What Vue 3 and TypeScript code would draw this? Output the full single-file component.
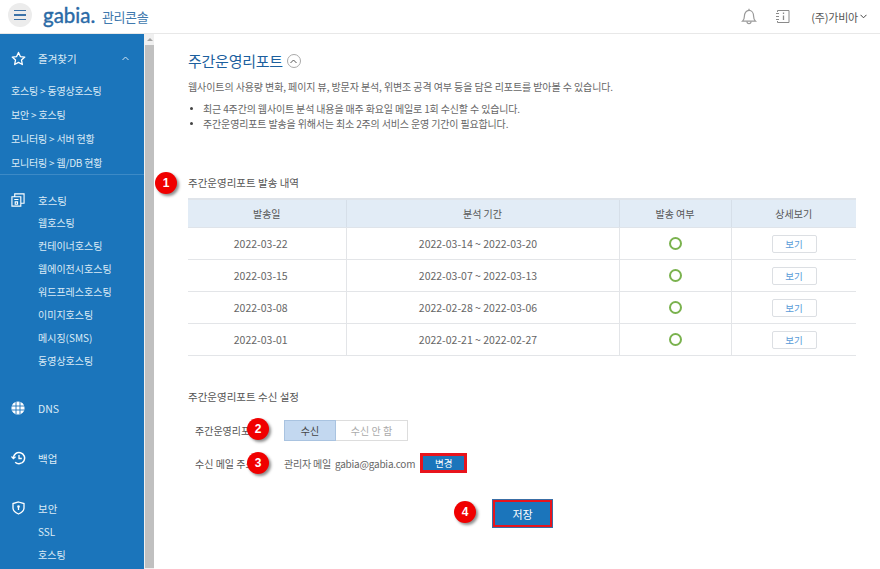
<script setup lang="ts">
interface ReportRow {
  sent: string
  period: string
}

const rows: ReportRow[] = [
  { sent: '2022-03-22', period: '2022-03-14 ~ 2022-03-20' },
  { sent: '2022-03-15', period: '2022-03-07 ~ 2022-03-13' },
  { sent: '2022-03-08', period: '2022-02-28 ~ 2022-03-06' },
  { sent: '2022-03-01', period: '2022-02-21 ~ 2022-02-27' },
]

const favorites = ['호스팅 > 동영상호스팅', '보안 > 호스팅', '모니터링 > 서버 현황', '모니터링 > 웹/DB 현황']
const hosting = ['웹호스팅', '컨테이너호스팅', '웹에이전시호스팅', '워드프레스호스팅', '이미지호스팅', '메시징(SMS)', '동영상호스팅']
</script>

<template>
  <div class="page">
    <header class="topbar">
      <button class="burger" aria-label="메뉴">
        <span></span><span></span><span></span>
      </button>
      <span class="logo">gabia.</span>
      <span class="console">관리콘솔</span>
      <div class="top-right">
        <svg class="bell" width="16" height="17" viewBox="0 0 16 17" fill="none" stroke="#9a9a9a" stroke-width="1.2">
          <path d="M1.5 13.2c1.4-1.3 1.9-2.6 1.9-5C3.400 5 5.300 2.300 8 2.300s4.600 2.700 4.600 5.900c0 2.400.5 3.700 1.900 5z" />
          <path d="M6 13.500c0 1.300.9 2.200 2 2.200s2-.9 2-2.200M8 .8v1.500" />
        </svg>
        <svg class="info" width="15" height="15" viewBox="0 0 15 15" fill="none" stroke="#8a8a8a" stroke-width="1">
          <path d="M2.500 3V1.500h11.500v12H2.500V12" />
          <path d="M1 4.500h3M1 7.500h3M1 10.500h3" />
          <path d="M8.500 6.500v4.500M8.500 3.500v1.500" stroke-width="1.300" />
        </svg>
        <span class="company">(주)가비아</span>
        <svg width="7" height="5" viewBox="0 0 7 5" fill="none" stroke="#444" stroke-width="1"><path d="M.5.8 3.500 3.800 6.500.8" /></svg>
      </div>
    </header>

    <div class="body">
      <nav class="sidebar">
        <section class="fav">
          <div class="nav-head">
            <svg class="nav-icon" width="15" height="15" viewBox="0 0 16 16" fill="none" stroke="#fff" stroke-width="1.400" stroke-linejoin="round">
              <path d="M8 1.500 10 5.900l4.700.6-3.500 3.200.9 4.700L8 12.100l-4.100 2.300.9-4.700L1.300 6.500 6 5.900z" />
            </svg>
            <span>즐겨찾기</span>
            <svg class="caret" width="7" height="5" viewBox="0 0 7 5" fill="none" stroke="#d5e6f3" stroke-width="1"><path d="M.5 4 3.500 1l3 3" /></svg>
          </div>
          <a v-for="item in favorites" :key="item" class="fav-link">{{ item }}</a>
        </section>

        <section class="group hosting">
          <div class="nav-head">
            <svg class="nav-icon" width="14" height="14" viewBox="0 0 15 15" fill="none" stroke="#fff" stroke-width="1.200">
              <path d="M1 4h9.500v10H1zM4 4V1h10v10h-3.500" />
              <path d="M3.500 7h4.500M4.500 9.500v2.500h2.500V9.500z" />
            </svg>
            <span>호스팅</span>
          </div>
          <a v-for="item in hosting" :key="item" class="sub-link">{{ item }}</a>
        </section>

        <section class="group dns">
          <div class="nav-head">
            <svg class="nav-icon" width="14" height="14" viewBox="0 0 14 14" fill="none" stroke="#fff" stroke-width="1.200">
              <circle cx="7" cy="7" r="6" fill="#fff" />
              <path stroke="#1b75bb" stroke-width=".9" d="M1 5h12M1 9h12M5 1v12M9 1v12" />
            </svg>
            <span>DNS</span>
          </div>
        </section>

        <section class="group backup">
          <div class="nav-head">
            <svg class="nav-icon" width="15" height="14" viewBox="0 0 15 14" fill="none" stroke="#fff" stroke-width="1.500">
              <path d="M2.400 7a5.600 5.600 0 1 1 1.800 4.200" />
              <path d="M.5 5.500 2.400 7.600 4.600 5.800" stroke-width="1.200" />
              <path d="M8 4v3.500h2.800" stroke-width="1.300" />
            </svg>
            <span>백업</span>
          </div>
        </section>

        <section class="group security">
          <div class="nav-head">
            <svg class="nav-icon shield" width="13" height="14" viewBox="0 0 13 14" fill="none" stroke="#fff" stroke-width="1.300">
              <path d="M6.500 1 12 2.600v4.200c0 3-2.400 5-5.500 6.200C3.400 11.800 1 9.800 1 6.800V2.600z" />
              <circle cx="6.500" cy="5.600" r="1.300" fill="#fff" stroke="none" />
              <path d="M6.500 6v3" />
            </svg>
            <span>보안</span>
          </div>
          <a class="sub-link">SSL</a>
          <a class="sub-link">호스팅</a>
        </section>
      </nav>

      <div class="scrollbar">
        <div class="scroll-btn"><i></i></div>
        <div class="scroll-thumb"></div>
      </div>

      <main class="content">
        <div class="title-row">
          <h1>주간운영리포트</h1>
          <span class="collapse">
            <svg width="7" height="5" viewBox="0 0 7 5" fill="none" stroke="#555" stroke-width="1"><path d="M.5 4 3.500 1l3 3" /></svg>
          </span>
        </div>
        <p class="lead">웹사이트의 사용량 변화, 페이지 뷰, 방문자 분석, 위변조 공격 여부 등을 담은 리포트를 받아볼 수 있습니다.</p>
        <ul class="notes">
          <li>최근 4주간의 웹사이트 분석 내용을 매주 화요일 메일로 1회 수신할 수 있습니다.</li>
          <li>주간운영리포트 발송을 위해서는 최소 2주의 서비스 운영 기간이 필요합니다.</li>
        </ul>

        <h2 class="section-title history">
          주간운영리포트 발송 내역
          <b class="badge b1">1</b>
        </h2>
        <table>
          <colgroup>
            <col class="c1" /><col class="c2" /><col class="c3" /><col class="c4" />
          </colgroup>
          <thead>
            <tr><th>발송일</th><th>분석 기간</th><th>발송 여부</th><th>상세보기</th></tr>
          </thead>
          <tbody>
            <tr v-for="row in rows" :key="row.sent">
              <td class="date">{{ row.sent }}</td>
              <td class="period">{{ row.period }}</td>
              <td><span class="ok"></span></td>
              <td><button class="view">보기</button></td>
            </tr>
          </tbody>
        </table>

        <h2 class="section-title settings">주간운영리포트 수신 설정</h2>
        <div class="form-row first">
          <label>주간운영리포트<b class="badge b2">2</b></label>
          <div class="toggle">
            <span class="on">수신</span>
            <span class="off">수신 안 함</span>
          </div>
        </div>
        <div class="form-row second">
          <label>수신 메일 주소<b class="badge b3">3</b></label>
          <span class="mail">관리자 메일&nbsp; gabia@gabia.com</span>
          <button class="change">변경</button>
        </div>
        <div class="save-row">
          <span class="save-wrap">
            <b class="badge b4">4</b>
            <button class="save">저장</button>
          </span>
        </div>
      </main>
    </div>
  </div>
</template>

<style>
html, body { margin: 0; background: #fff; overflow: hidden; }
</style>

<style scoped>
.page {
  width: 880px;
  height: 569px;
  overflow: hidden;
  display: flex;
  flex-direction: column;
  font-family: "Noto Sans CJK KR", "Noto Sans", sans-serif;
  color: #555;
}

/* top bar */
.topbar {
  flex: none;
  height: 33px;
  box-sizing: content-box;
  border-bottom: 1px solid #e8e8e8;
  display: flex;
  align-items: center;
  padding-left: 8px;
}
.burger {
  width: 24px;
  height: 24px;
  margin: -3px 11px 0 0;
  border: 0;
  padding: 0;
  border-radius: 50%;
  background: #ececec;
  display: flex;
  flex-direction: column;
  align-items: center;
  justify-content: center;
  gap: 3px;
}
.burger span { width: 12px; height: 1.500px; background: #3b72a8; }
.logo {
  font-family: Lato, sans-serif;
  font-size: 20.500px;
  line-height: 30px;
  font-weight: 400;
  color: #2a6aa6;
  -webkit-text-stroke: 0.4px #2a6aa6;
  margin-top: -4px;
  width: 53px;
}
.console { font-size: 13px; color: #3f79ae; margin-left: 6px; letter-spacing: -0.4px; }
.top-right { margin-left: auto; display: flex; align-items: center; padding-right: 13px; }
.bell { margin-right: 18px; }
.info { margin-right: 21px; }
.company { font-size: 11px; color: #555; margin-right: 2px; letter-spacing: -0.2px; }

.body { flex: 1; min-height: 0; display: flex; }

/* sidebar */
.sidebar {
  flex: none;
  width: 144px;
  background: #1b75bb;
  color: #dcebf6;
  font-size: 10px;
  overflow: hidden;
}
.nav-head {
  display: grid;
  grid-template-columns: 38px 1fr auto;
  align-items: center;
  height: 20px;
  font-size: 10.500px;
}
.nav-icon { margin-left: 11px; }
.shield { margin-left: 12px; }
.fav { height: 141px; padding-top: 14px; box-sizing: border-box; border-bottom: 1px solid #3d8ac6; }
.fav .nav-head { margin-bottom: 11px; }
.caret { margin-right: 15px; }
.fav-link { display: block; height: 24px; line-height: 24px; padding-left: 11px; letter-spacing: -0.2px; }
.group .nav-head { margin-bottom: 1px; }
.sub-link { display: block; height: 23px; line-height: 23px; padding-left: 38px; }
.hosting { padding-top: 15px; }
.dns { padding-top: 26px; }
.backup { padding-top: 29px; }
.security { padding-top: 29px; }
.security .nav-head { margin-bottom: 2px; }

.scrollbar { flex: none; width: 10px; background: #f0f0f0; padding-left: 1px; box-sizing: border-box; }
.scroll-btn { height: 11px; display: flex; justify-content: center; padding-top: 4px; box-sizing: border-box; }
.scroll-btn i { width: 0; height: 0; border: 3px solid transparent; border-top: 0; border-bottom: 3px solid #a6a6a6; }
.scroll-thumb { height: 523px; background: #c0c0c0; }

/* main */
.content { flex: 1; min-width: 0; padding: 0 24px 0 34px; position: relative; }
.title-row { display: flex; align-items: center; margin-top: 15px; height: 24px; }
h1 { margin: 0; font-size: 15px; font-weight: 400; color: #1c5f9e; line-height: 24px; letter-spacing: -0.25px; }
.collapse {
  width: 12px;
  height: 12px;
  margin-left: 4px;
  border: 1px solid #aaa;
  border-radius: 50%;
  display: flex;
  align-items: center;
  justify-content: center;
}
.lead { margin: 6px 0 0; font-size: 10px; line-height: 16px; color: #666; white-space: nowrap; letter-spacing: -0.1px; }
.notes { margin: 6px 0 0; padding: 0 0 0 15px; list-style: none; font-size: 10px; line-height: 15px; color: #666; white-space: nowrap; letter-spacing: -0.15px; }
.notes li { position: relative; }
.notes li::before {
  content: "";
  position: absolute;
  left: -13px;
  top: 6px;
  width: 3px;
  height: 3px;
  border-radius: 50%;
  background: #444;
}
.section-title { margin: 0; font-size: 10.500px; font-weight: 400; color: #555; line-height: 16px; position: relative; }
.history { margin-top: 44px; }
.settings { margin-top: 33px; }

.badge {
  position: absolute;
  width: 22px;
  height: 22px;
  border-radius: 50%;
  background: #f00000;
  color: #fff;
  font: 700 12px/22px "Liberation Sans", sans-serif;
  text-align: center;
  box-shadow: 2px 2px 3px rgba(0, 0, 0, 0.45);
}
.b1 { left: -33px; top: -3px; }
.b2 { left: 59px; top: -5px; }
.b3 { left: 59px; top: -4px; }
.b4 { left: -39px; top: 1px; }

table {
  width: 668px;
  margin-top: 7px;
  border-collapse: collapse;
  table-layout: fixed;
  font-size: 10px;
  color: #666;
}
.c1 { width: 158px; }
.c2 { width: 273px; }
.c3 { width: 112px; }
.c4 { width: 125px; }
th {
  height: 27px;
  padding: 0;
  background: #e2ecf6;
  border-top: 2px solid #dfe4ea;
  border-bottom: 1px solid #dfe4ea;
  border-left: 1px solid #d6dfe9;
  font-weight: 400;
  color: #555;
}
th:first-child, td:first-child { border-left: 0; }
td {
  height: 31px;
  padding: 0;
  text-align: center;
  border-bottom: 1px solid #e3e5e8;
  border-left: 1px solid #e3e5e8;
}
td.date { font-size: 10.500px; padding-right: 12px; }
td.period { font-size: 10.500px; padding-right: 9px; }
.ok {
  display: block;
  width: 9px;
  height: 9px;
  margin: 0 auto;
  border: 2px solid #7ab24e;
  border-radius: 50%;
}
.view {
  display: block;
  margin: 0 auto 0 40px;
  width: 45px;
  height: 18px;
  padding: 0;
  background: #fff;
  border: 1px solid #dcdfe3;
  border-radius: 2px;
  font: inherit;
  font-size: 9.500px;
  color: #5a9bd8;
}

.form-row { display: flex; align-items: center; position: relative; }
.form-row label { width: 96px; padding-left: 7px; box-sizing: border-box; font-size: 10px; color: #555; white-space: nowrap; position: relative; }
.first { margin-top: 15px; height: 21px; }
.second { margin-top: 12px; height: 20px; }
.toggle { display: flex; height: 21px; box-sizing: border-box; font-size: 10px; line-height: 19px; text-align: center; }
.toggle span { display: block; box-sizing: border-box; }
.on { width: 52px; background: #c3d8f0; border: 1px solid #a9c3e0; color: #444; }
.off { width: 72px; border: 1px solid #ddd; border-left: 0; color: #aaa; }
.mail { font-size: 10px; color: #666; white-space: nowrap; letter-spacing: -0.22px; }
.change {
  margin-left: 5px;
  width: 47px;
  height: 20px;
  padding: 0;
  background: #1b75bb;
  border: 2px solid #e8141c;
  color: #fff;
  font: inherit;
  font-size: 9.500px;
  box-shadow: 0 0 0 1px #e8141c inset;
}
.save-row { display: flex; justify-content: center; margin-top: 27px; padding-left: 1px; }
.save-wrap { position: relative; display: block; }
.save {
  display: block;
  width: 59px;
  height: 27px;
  padding: 0;
  background: #1b75bb;
  border: 2px solid #e8141c;
  box-shadow: 0 0 0 1px #3a6ea5;
  color: #fff;
  font: inherit;
  font-size: 11px;
}
</style>
